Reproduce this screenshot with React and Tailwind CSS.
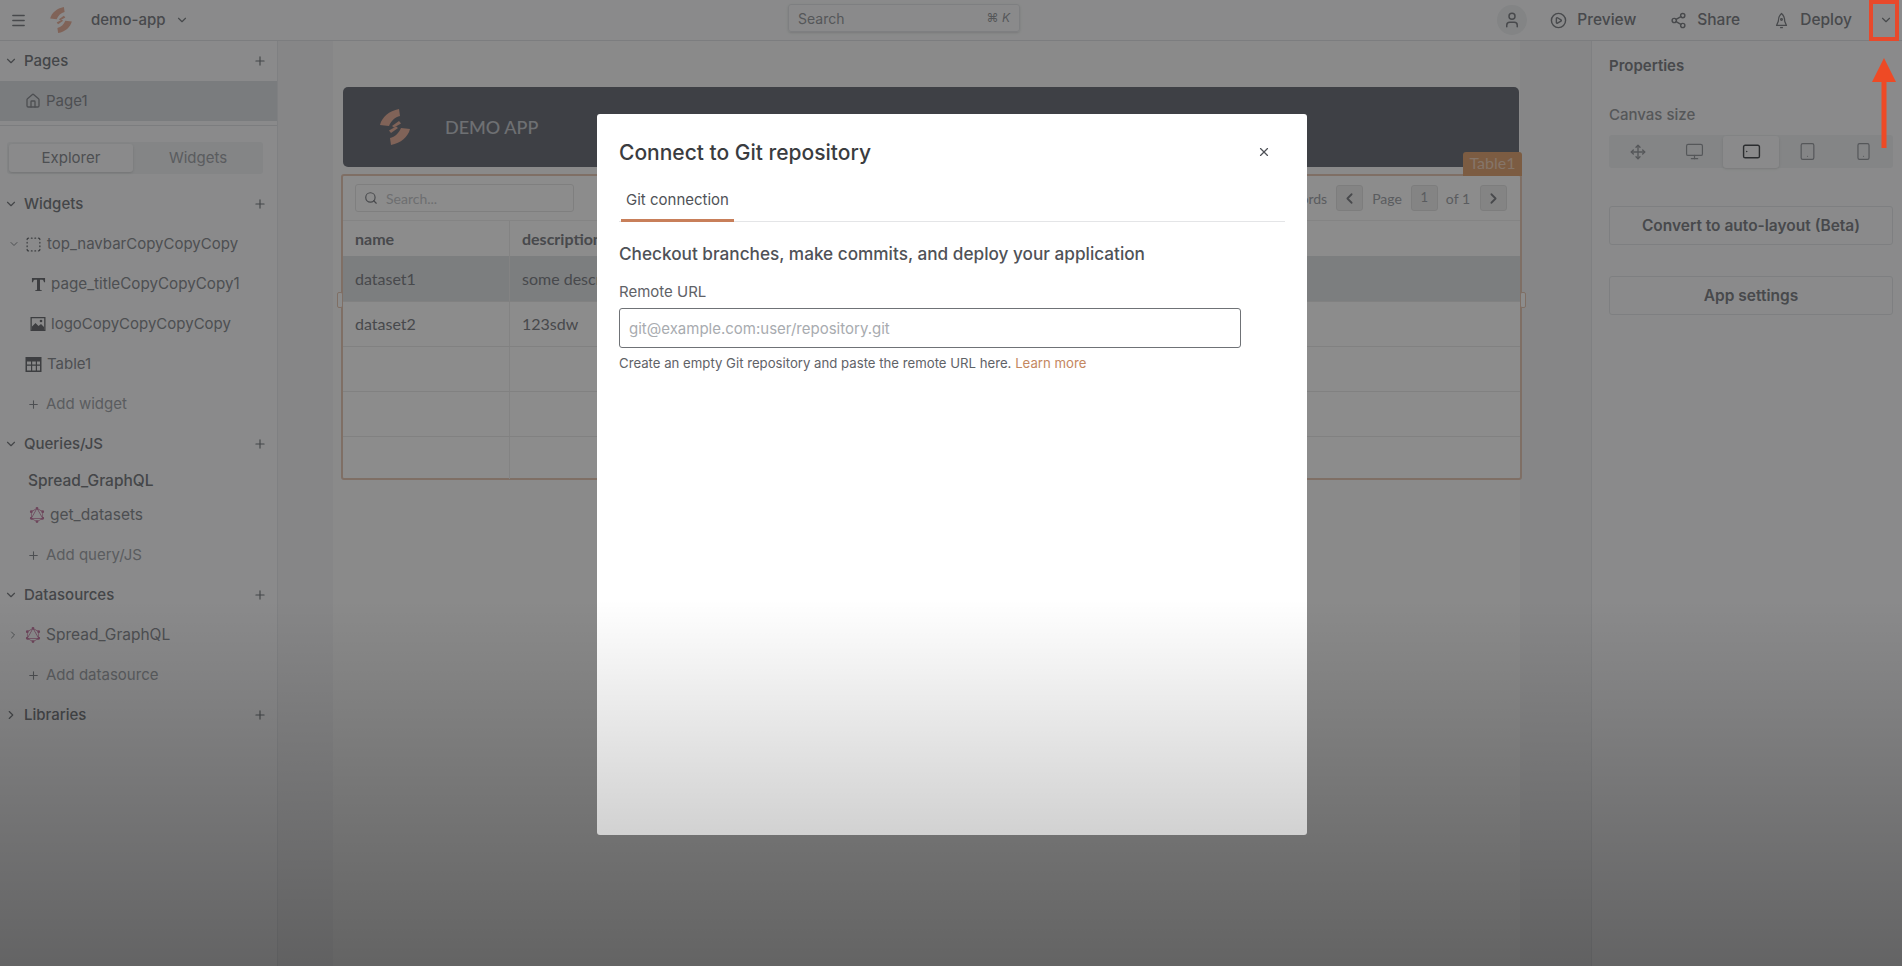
import {
  ChevronDown,
  ChevronLeft,
  ChevronRight,
  Home,
  Menu,
  Monitor,
  Move,
  PlayCircle,
  Plus,
  Search,
  Share2,
  Smartphone,
  SquareDashed,
  Tablet,
  User,
  X,
} from "lucide-react";
import { SiGraphql } from "react-icons/si";

function Logo({ className }) {
  return (
    <svg viewBox="0 0 30 36" className={className} fill="currentColor">
      <path d="M19 0 L20 7 C15 8 11 12 9 17 L0 16 C2 8 9 2 19 0 Z" />
      <path d="M12 17 L19 12 L21 14.5 L14 18.5 Z" />
      <path d="M11 36 L10 29 C15 28 19 24 21 19 L30 20 C28 28 21 34 11 36 Z" />
      <path d="M18 19 L11 24 L9 21.5 L16 17.5 Z" />
    </svg>
  );
}

function RocketIcon() {
  return (
    <svg viewBox="0 0 24 24" className="w-[17px] h-[17px] ml-[33px]" fill="none" stroke="currentColor" strokeWidth="1.8" strokeLinejoin="round">
      <path d="M12 2 C8.5 5 7.5 9 7.5 13 L5 19 H19 L16.5 13 C16.5 9 15.5 5 12 2 Z" />
      <circle cx="12" cy="10.5" r="1.2" />
      <path d="M10 22 H14" />
    </svg>
  );
}

function SerifTIcon() {
  return (
    <svg viewBox="0 0 16 16" className="w-[15px] h-[15px]" fill="currentColor">
      <path d="M1 1 H15 V5.5 H13.8 C13.6 3.6 12.8 3 11 3 H9.6 V13 C9.6 13.8 10 14 11.5 14 V15 H4.5 V14 C6 14 6.4 13.8 6.4 13 V3 H5 C3.2 3 2.4 3.6 2.2 5.5 H1 Z" />
    </svg>
  );
}

function ImageIcon() {
  return (
    <svg viewBox="0 0 16 16" className="w-[16px] h-[16px]" fill="currentColor">
      <path d="M0.5 1 H15.5 V15 H0.5 Z M1.8 2.3 V13.7 H14.2 V2.3 Z" fillRule="evenodd" />
      <path d="M2 14 V10.5 L5.5 7 L8.5 10 L11 8 L14 11 V14 Z" />
      <circle cx="11" cy="5" r="1.3" />
    </svg>
  );
}

function TableIcon() {
  return (
    <svg viewBox="0 0 17 17" className="w-[17px] h-[17px]" fill="currentColor">
      <path d="M0.5 1 H16.5 V16 H0.5 Z M2 5.5 V8.5 H6 V5.5 Z M7.2 5.5 V8.5 H10.8 V5.5 Z M12 5.5 V8.5 H15 V5.5 Z M2 9.7 V14.6 H6 V9.7 Z M7.2 9.7 V14.6 H10.8 V9.7 Z M12 9.7 V14.6 H15 V9.7 Z" fillRule="evenodd" />
    </svg>
  );
}

function SectionHeader({ label, open = true }) {
  return (
    <div className="h-10 flex items-center pl-[4px] pr-[10px] text-[#7d8085]">
      {open ? <ChevronDown size={14} /> : <ChevronRight size={14} />}
      <span className="ml-[6px] text-[15px] font-medium">{label}</span>
      <Plus size={14} className="ml-auto" />
    </div>
  );
}

function TreeRow({ icon, label, indent = "pl-[25px]", height = "h-10", size = "text-[15px]", caret }) {
  return (
    <div className={`relative ${height} flex items-center ${size} text-[#8d9095] ${indent}`}>
      {caret}
      <span className="text-[#6f7277] flex items-center">{icon}</span>
      <span className="ml-[5px]">{label}</span>
    </div>
  );
}

function AddRow({ label }) {
  return (
    <div className="h-10 flex items-center pl-[27px] text-[15px] text-[#a5a8ad]">
      <Plus size={13} className="text-[#8d9095]" />
      <span className="ml-[6px]">{label}</span>
    </div>
  );
}

function Sidebar() {
  return (
    <aside className="w-[278px] shrink-0 bg-[#fbfcfd] border-r border-[#e8eaed] flex flex-col">
      <SectionHeader label="Pages" />
      <div className="h-10 bg-[#dfe2e6] flex items-center pl-[25px] text-[15px] text-[#8d9095]">
        <Home size={16} />
        <span className="ml-[5px]">Page1</span>
      </div>
      <div className="mt-[4px] border-t border-[#e2e4e8]" />
      <div className="mx-[7px] mt-[16px] h-[32px] w-[256px] bg-[#f0f2f4] rounded-[3px] py-[2px] pl-[2px] flex text-[15px]">
        <div className="w-[124px] bg-[#fbfcfd] rounded-[3px] shadow-sm flex items-center justify-center text-[#8d9095]">
          Explorer
        </div>
        <div className="flex-1 flex items-center justify-center text-[#a5a8ad]">Widgets</div>
      </div>
      <div className="mt-[10px]">
        <SectionHeader label="Widgets" />
        <TreeRow
          icon={<SquareDashed size={17} strokeWidth={1.8} />}
          label="top_navbarCopyCopyCopy"
          caret={<ChevronDown size={12} className="absolute left-[8px]" />}
        />
        <TreeRow icon={<SerifTIcon />} label="page_titleCopyCopyCopy1" indent="pl-[31px]" size="text-[15.2px]" />
        <TreeRow icon={<ImageIcon />} label="logoCopyCopyCopyCopy" indent="pl-[30px]" />
        <TreeRow icon={<TableIcon />} label="Table1" />
        <AddRow label="Add widget" />
        <SectionHeader label="Queries/JS" />
        <div className="h-[34px] flex items-center pl-[28px] text-[15.5px] font-medium text-[#7d8085]">
          Spread_GraphQL
        </div>
        <TreeRow
          icon={<SiGraphql size={16} className="text-[#c77fa6]" />}
          label="get_datasets"
          indent="pl-[29px]"
          height="h-[34px]"
          size="text-[15.5px]"
        />
        <div className="mt-[3px]">
          <AddRow label="Add query/JS" />
        </div>
        <SectionHeader label="Datasources" />
        <TreeRow
          icon={<SiGraphql size={16} className="text-[#c77fa6]" />}
          label="Spread_GraphQL"
          size="text-[15.5px]"
          caret={<ChevronRight size={12} className="absolute left-[7px]" />}
        />
        <AddRow label="Add datasource" />
        <SectionHeader label="Libraries" open={false} />
      </div>
    </aside>
  );
}

function TopBar() {
  return (
    <header className="h-[41px] shrink-0 bg-[#fbfcfd] border-b border-[#e2e4e8] flex items-center relative text-[#83868b]">
      <Menu size={17} className="ml-[10px]" />
      <Logo className="ml-[23px] w-[22px] h-[26px] text-[#eab4a0]" />
      <span className="ml-[19px] text-[15px] font-medium">demo-app</span>
      <ChevronDown size={14} className="ml-[10px]" />
      <div className="absolute left-[788px] top-[4px] w-[232px] h-[28px] border border-[#e6e8eb] rounded-[3px] shadow-sm flex items-center justify-between px-[9px] text-[14px] text-[#9b9ea3]">
        <span>Search</span>
        <span className="text-[12px]">
          ⌘ <i>K</i>
        </span>
      </div>
      <div className="ml-auto flex items-center text-[15.5px] font-medium">
        <div className="w-[30px] h-[30px] rounded-full bg-[#eef0f2] flex items-center justify-center">
          <User size={18} />
        </div>
        <PlayCircle size={17} className="ml-[23px]" />
        <span className="ml-[10px]">Preview</span>
        <Share2 size={17} className="ml-[34px]" />
        <span className="ml-[10px]">Share</span>
        <RocketIcon />
        <span className="ml-[10px]">Deploy</span>
        <ChevronDown size={14} className="ml-[27px] mr-[9px]" />
      </div>
    </header>
  );
}

function TableWidget() {
  const rows = [
    { name: "dataset1", desc: "some description", h: "h-[46px]", bg: "bg-[#e2e5e8]" },
    { name: "dataset2", desc: "123sdw", h: "h-[45px]", bg: "" },
    { name: "", desc: "", h: "h-[45px]", bg: "" },
    { name: "", desc: "", h: "h-[45px]", bg: "" },
    { name: "", desc: "", h: "h-[42px]", bg: "" },
  ];
  return (
    <div className="relative mt-[7px] ml-[-2px] w-[1181px] h-[306px] border-2 border-[#e8cab8] rounded-[3px] bg-white font-['Lato',sans-serif] text-[16px] text-[#83868b]">
      <div className="absolute right-[-2px] top-[-24px] w-[59px] h-[24px] pb-[3px] bg-[#e2a878] rounded-t-[3px] flex items-center justify-center text-[#f3d5bf] text-[16px]">
        Table1
      </div>
      <div className="absolute left-[-6px] top-[116px] w-[6px] h-[16px] border border-[#e8cab8] rounded-[2px] bg-white" />
      <div className="absolute right-[-6px] top-[116px] w-[6px] h-[16px] border border-[#e8cab8] rounded-[2px] bg-white" />
      <div className="h-[45px] border-b border-[#f0f0f0] flex items-center">
        <div className="ml-[12px] w-[219px] h-[28px] border border-[#e8e8e8] rounded-[3px] flex items-center px-[8px]">
          <Search size={14} />
          <span className="ml-[8px] text-[14px] text-[#c8cacd]">Search...</span>
        </div>
        <div className="ml-auto flex items-center text-[14px] text-[#a5a8ad]">
          <span>2 Records</span>
          <div className="ml-[9px] w-[27px] h-[26px] rounded-[3px] bg-[#f0f0f0] border border-[#e4e4e4] flex items-center justify-center text-[#83868b]">
            <ChevronLeft size={17} strokeWidth={2.5} />
          </div>
          <span className="ml-[9px]">Page</span>
          <div className="ml-[9px] w-[27px] h-[26px] rounded-[3px] bg-[#f0f0f0] border border-[#e4e4e4] flex items-center justify-center text-[13px]">
            1
          </div>
          <span className="ml-[8px]">of 1</span>
          <div className="ml-[10px] mr-[13px] w-[27px] h-[26px] rounded-[3px] bg-[#f0f0f0] border border-[#e4e4e4] flex items-center justify-center text-[#83868b]">
            <ChevronRight size={17} strokeWidth={2.5} />
          </div>
        </div>
      </div>
      <div className="h-[35px] flex font-bold">
        <div className="w-[167px] border-r border-[#eeeeee] pl-[12px] flex items-center">name</div>
        <div className="pl-[12px] flex items-center">description</div>
      </div>
      {rows.map((row, i) => (
        <div key={i} className={`flex ${row.h} ${row.bg} ${i < 4 ? "border-b border-[#ececec]" : ""}`}>
          <div className="w-[167px] border-r border-[#eeeeee] pl-[12px] flex items-center">{row.name}</div>
          <div className="pl-[12px] flex items-center">{row.desc}</div>
        </div>
      ))}
    </div>
  );
}

function Canvas() {
  return (
    <main className="flex-1 min-w-0 bg-[#f4f5f6] pl-[55px]">
      <div className="w-[1187px] h-full bg-[#fbfbfb] pt-[46px] pl-[10px]">
        <div className="w-[1176px] h-[80px] rounded-[5px] bg-[#72767f] flex items-center font-['Lato',sans-serif]">
          <Logo className="ml-[37px] w-[30px] h-[36px] text-[#eab4a0]" />
          <span className="ml-[35px] text-[18px] font-medium text-[#c9ccd1]">DEMO APP</span>
        </div>
        <TableWidget />
      </div>
    </main>
  );
}

function CanvasSizeButton({ children, active }) {
  return (
    <div
      className={`flex-1 h-[32px] flex items-center justify-center ${
        active ? "bg-[#fbfcfd] rounded-[3px] shadow-sm text-[#4f5257]" : "text-[#9b9ea3]"
      }`}
    >
      {children}
    </div>
  );
}

function PropertyPane() {
  return (
    <aside className="w-[311px] shrink-0 bg-[#fbfcfd] border-l border-[#e8eaed] pl-[17px] pr-[9px] text-[#83868b]">
      <div className="pt-[15px] text-[15px] leading-[20px] font-semibold">Properties</div>
      <div className="mt-[29px] text-[15px] leading-[20px] text-[#9b9ea3] font-medium">Canvas size</div>
      <div className="mt-[10px] h-[33px] bg-[#f0f2f4] rounded-[3px] flex items-center px-[1px]">
        <CanvasSizeButton>
          <Move size={16} />
        </CanvasSizeButton>
        <CanvasSizeButton>
          <Monitor size={19} strokeWidth={1.5} />
        </CanvasSizeButton>
        <CanvasSizeButton active>
          <Tablet size={19} strokeWidth={1.8} className="rotate-90" />
        </CanvasSizeButton>
        <CanvasSizeButton>
          <Tablet size={19} strokeWidth={1.5} />
        </CanvasSizeButton>
        <CanvasSizeButton>
          <Smartphone size={19} strokeWidth={1.5} />
        </CanvasSizeButton>
      </div>
      <div className="mt-[38px] h-[39px] border border-[#e6e8eb] rounded-[3px] flex items-center justify-center text-[15.5px] font-semibold">
        Convert to auto-layout (Beta)
      </div>
      <div className="mt-[31px] h-[39px] border border-[#e6e8eb] rounded-[3px] flex items-center justify-center text-[15.5px] font-semibold">
        App settings
      </div>
    </aside>
  );
}

function GitModal() {
  return (
    <div className="absolute inset-0 bg-black/45 flex justify-center items-start pt-[114px] pl-[2px]">
      <div className="w-[710px] h-[721px] bg-white rounded-[3px] pl-[22px] pr-[22px] text-[#4f5257]">
        <div className="h-[75px] flex items-center justify-between pt-[2px] pr-[14px]">
          <h1 className="text-[21px] font-medium text-[#3a3c40]">Connect to Git repository</h1>
          <X size={14} strokeWidth={2} className="mt-[-2px]" />
        </div>
        <div className="h-[33px] border-b border-[#e4e5e7] flex">
          <div className="ml-[2px] w-[113px] h-[33px] border-b-[3px] border-[#c87f5a] text-center text-[15px] leading-[22px]">
            Git connection
          </div>
        </div>
        <h2 className="mt-[20px] text-[17.2px] font-medium leading-[24px]">
          Checkout branches, make commits, and deploy your application
        </h2>
        <div className="mt-[16px] text-[15px] leading-[20px] text-[#5f6267]">Remote URL</div>
        <input
          readOnly
          placeholder="git@example.com:user/repository.git"
          className="mt-[6px] block w-[622px] h-[40px] border border-[#6f7276] rounded-[3px] px-[9px] text-[15px] placeholder:text-[#a8abaf] outline-none"
        />
        <p className="mt-[6px] text-[13.2px] leading-[18px] text-[#5f6267]">
          Create an empty Git repository and paste the remote URL here.{" "}
          <span className="text-[#c4875f]">Learn more</span>
        </p>
      </div>
    </div>
  );
}

export default function App() {
  return (
    <div className="relative w-[1902px] h-[966px] overflow-hidden bg-white font-['Inter',sans-serif]">
      <div className="h-full flex flex-col">
        <TopBar />
        <div className="flex-1 flex min-h-0">
          <Sidebar />
          <Canvas />
          <PropertyPane />
        </div>
      </div>
      <GitModal />
      {/* video fade at the bottom of the frame */}
      <div className="absolute inset-0 pointer-events-none bg-[linear-gradient(to_bottom,transparent_62%,rgba(0,0,0,0.28)_100%)]" />
      {/* red annotation */}
      <div className="absolute left-[1869px] top-0 w-[30px] h-[41px] border-[4px] border-[#e8492b]" />
      <svg className="absolute left-[1872px] top-[58px] w-[24px] h-[92px]" viewBox="0 0 24 92" fill="#ee4a25">
        <path d="M12 0 L24 24 L14.5 24 L14.5 90 L9.5 90 L9.5 24 L0 24 Z" />
      </svg>
    </div>
  );
}
